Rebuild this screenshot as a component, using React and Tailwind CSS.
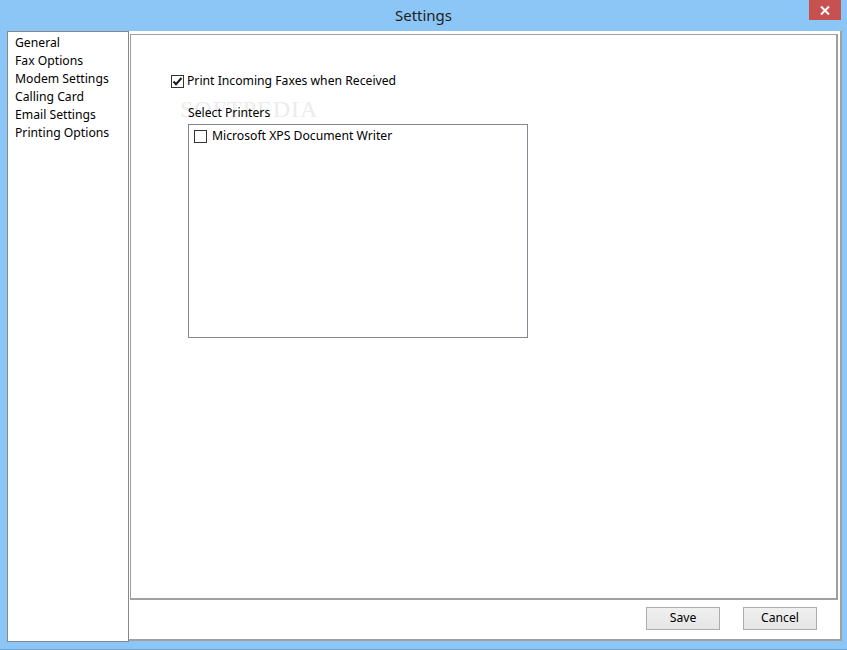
import React from "react";

const font = { fontFamily: '"Noto Sans", "Open Sans", "Liberation Sans", sans-serif' };

function Check({ checked }) {
  return (
    <div className="w-[13px] h-[13px] border border-[#333333] bg-white flex items-center justify-center shrink-0">
      {checked && (
        <svg width="11" height="11" viewBox="0 0 11 11">
          <path d="M1.5 5.5 L4 8.2 L9.5 2" fill="none" stroke="#1a1a1a" strokeWidth="2" />
        </svg>
      )}
    </div>
  );
}

export default function App() {
  const nav = ["General", "Fax Options", "Modem Settings", "Calling Card", "Email Settings", "Printing Options"];
  return (
    <div className="w-[847px] h-[650px] bg-[#8cc6f6] flex flex-col text-[12.2px] text-black overflow-hidden" style={font}>
      <div className="h-[31px] relative flex items-center justify-center shrink-0">
        <span className="text-[15px] text-[#1e1e1e] -mt-[1px]">Settings</span>
        <div className="absolute top-0 right-[6px] w-[32px] h-[20px] bg-[#c75050] flex items-center justify-center">
          <svg width="10" height="9" viewBox="0 0 10 9">
            <path d="M1 0.5 L9 8.5 M9 0.5 L1 8.5" stroke="white" strokeWidth="2" />
          </svg>
        </div>
      </div>
      <div className="flex h-[611px] pl-[7px] pr-[5px]">
        <div className="w-[122px] h-[611px] bg-white border border-[#828790] pl-[7px] pt-[2px] flex flex-col shrink-0">
          {nav.map((n) => (
            <div key={n} className="h-[18px] leading-[18px] whitespace-nowrap">{n}</div>
          ))}
        </div>
        <div className="w-[713px] h-[610px] bg-white border-r-2 border-b-2 border-[#a0a0a0] flex flex-col">
          <div className="ml-[1px] mt-[3px] w-[708px] h-[566px] border border-[#a0a0a0] border-b-2 border-r-2 relative">
            <div className="absolute left-[49px] top-[62px] text-[24px] leading-[24px] text-[#ececec] tracking-[1px] select-none" style={{ fontFamily: '"Liberation Serif", serif' }}>SOFTPEDIA</div>
            <div className="absolute left-[40px] top-[37px] flex items-center gap-[3px]">
              <Check checked />
              <span>Print Incoming Faxes when Received</span>
            </div>
            <div className="absolute left-[57px] top-[69px]">Select Printers</div>
            <div className="absolute left-[57px] top-[89px] w-[340px] h-[214px] border border-[#828790] bg-white">
              <div className="flex items-center gap-[5px] pl-[5px] pt-[2px]">
                <Check />
                <span>Microsoft XPS Document Writer</span>
              </div>
            </div>
          </div>
          <div className="flex justify-end gap-[23px] pr-[23px] pt-[7px]">
            <button className="w-[74px] h-[23px] border border-[#acacac] bg-gradient-to-b from-[#f0f0f0] to-[#e5e5e5] text-[12.2px]">Save</button>
            <button className="w-[74px] h-[23px] border border-[#acacac] bg-gradient-to-b from-[#f0f0f0] to-[#e5e5e5] text-[12.2px]">Cancel</button>
          </div>
        </div>
      </div>
      <div className="flex-1 border-b border-[#6fa5d3]" />
    </div>
  );
}
